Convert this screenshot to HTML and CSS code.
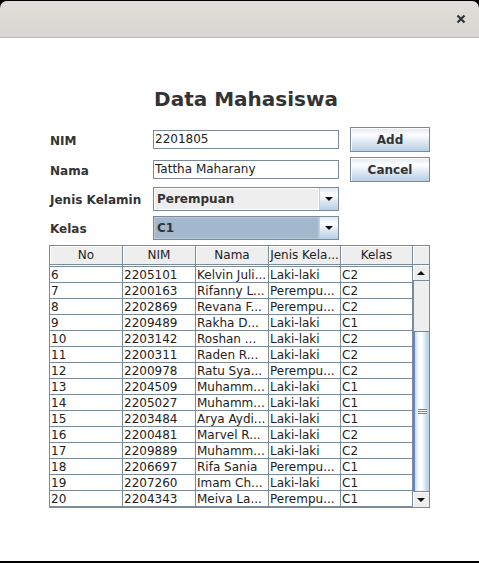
FILE: index.html
```html
<!DOCTYPE html>
<html>
<head>
<meta charset="utf-8">
<link rel="stylesheet" href="styles.css">
</head>
<body>
<div class="window">
  <div class="titlebar">
    <svg class="close" width="10" height="10" viewBox="0 0 10 10"><path d="M1.5 1.5L8.5 8.5M8.5 1.5L1.5 8.5" stroke="#2e3436" stroke-width="2.2" stroke-linecap="butt"/></svg>
  </div>
  <div class="content">
    <div class="title">Data Mahasiswa</div>
    <div class="form">
      <div class="lbl">NIM</div>
      <div class="textfield">2201805</div>
      <button class="btn">Add</button>

      <div class="lbl">Nama</div>
      <div class="textfield">Tattha Maharany</div>
      <button class="btn">Cancel</button>

      <div class="lbl">Jenis Kelamin</div>
      <div class="combo">
        <div class="combo-value">Perempuan</div>
        <div class="combo-arrow"><svg width="8" height="4" viewBox="0 0 8 4"><polygon points="0,0 8,0 4,4" fill="#111"/></svg></div>
      </div>
      <div></div><div></div>

      <div class="lbl">Kelas</div>
      <div class="combo focused">
        <div class="combo-value">C1</div>
        <div class="combo-arrow"><svg width="8" height="4" viewBox="0 0 8 4"><polygon points="0,0 8,0 4,4" fill="#111"/></svg></div>
      </div>
    </div>

    <div class="pane">
      <div class="thead">
        <div class="th">No</div>
        <div class="th">NIM</div>
        <div class="th">Nama</div>
        <div class="th">Jenis Kela...</div>
        <div class="th">Kelas</div>
      </div>
      <div class="corner"></div>
      <div class="viewport">
        <div class="rows">
          <div class="row"><div class="td"></div><div class="td"></div><div class="td"></div><div class="td"></div><div class="td"></div></div>
          <div class="row"><div class="td">6</div><div class="td">2205101</div><div class="td">Kelvin Juli...</div><div class="td">Laki-laki</div><div class="td">C2</div></div>
          <div class="row"><div class="td">7</div><div class="td">2200163</div><div class="td">Rifanny L...</div><div class="td">Perempu...</div><div class="td">C2</div></div>
          <div class="row"><div class="td">8</div><div class="td">2202869</div><div class="td">Revana F...</div><div class="td">Perempu...</div><div class="td">C2</div></div>
          <div class="row"><div class="td">9</div><div class="td">2209489</div><div class="td">Rakha D...</div><div class="td">Laki-laki</div><div class="td">C1</div></div>
          <div class="row"><div class="td">10</div><div class="td">2203142</div><div class="td">Roshan ...</div><div class="td">Laki-laki</div><div class="td">C2</div></div>
          <div class="row"><div class="td">11</div><div class="td">2200311</div><div class="td">Raden R...</div><div class="td">Laki-laki</div><div class="td">C2</div></div>
          <div class="row"><div class="td">12</div><div class="td">2200978</div><div class="td">Ratu Sya...</div><div class="td">Perempu...</div><div class="td">C2</div></div>
          <div class="row"><div class="td">13</div><div class="td">2204509</div><div class="td">Muhamm...</div><div class="td">Laki-laki</div><div class="td">C1</div></div>
          <div class="row"><div class="td">14</div><div class="td">2205027</div><div class="td">Muhamm...</div><div class="td">Laki-laki</div><div class="td">C1</div></div>
          <div class="row"><div class="td">15</div><div class="td">2203484</div><div class="td">Arya Aydi...</div><div class="td">Laki-laki</div><div class="td">C1</div></div>
          <div class="row"><div class="td">16</div><div class="td">2200481</div><div class="td">Marvel R...</div><div class="td">Laki-laki</div><div class="td">C2</div></div>
          <div class="row"><div class="td">17</div><div class="td">2209889</div><div class="td">Muhamm...</div><div class="td">Laki-laki</div><div class="td">C2</div></div>
          <div class="row"><div class="td">18</div><div class="td">2206697</div><div class="td">Rifa Sania</div><div class="td">Perempu...</div><div class="td">C1</div></div>
          <div class="row"><div class="td">19</div><div class="td">2207260</div><div class="td">Imam Ch...</div><div class="td">Laki-laki</div><div class="td">C1</div></div>
          <div class="row"><div class="td">20</div><div class="td">2204343</div><div class="td">Meiva La...</div><div class="td">Perempu...</div><div class="td">C1</div></div>
        </div>
      </div>
      <div class="vsb">
        <div class="sb-btn sb-up"><svg width="8" height="4" viewBox="0 0 8 4"><polygon points="0,4 8,4 4,0" fill="#111"/></svg></div>
        <div class="sb-track">
          <div class="sb-thumb"><div class="grip"></div></div>
        </div>
        <div class="sb-btn sb-down"><svg width="8" height="4" viewBox="0 0 8 4"><polygon points="0,0 8,0 4,4" fill="#111"/></svg></div>
      </div>
    </div>
  </div>
</div>
</body>
</html>
```

FILE: styles.css
```css
* { box-sizing: border-box; }
html, body { margin: 0; padding: 0; background: #000; }
body {
  width: 479px;
  height: 563px;
  overflow: hidden;
  font-family: "DejaVu Sans", "Noto Sans", sans-serif;
  font-size: 12px;
}
.window {
  margin-top: 1px;
  height: 560px;
  display: flex;
  flex-direction: column;
}
.titlebar {
  height: 37px;
  flex: none;
  background: linear-gradient(#e1deda, #dad7d3);
  border-radius: 7px 7px 0 0;
  border-bottom: 1px solid #bdb7b0;
  display: flex;
  justify-content: flex-end;
  align-items: center;
  padding-right: 13px;
}
.close { display: block; }
.content {
  flex: 1;
  background: #fff;
  padding-top: 50px;
}
.title {
  margin-left: 153px;
  width: 186px;
  text-align: center;
  font-weight: bold;
  font-size: 20px;
  line-height: 23px;
  color: #333;
  white-space: nowrap;
}
.form {
  margin: 16px 0 0 50px;
  display: grid;
  grid-template-columns: 103px 186px 11px 80px;
  grid-template-rows: 25px 25px 24px 24px;
  row-gap: 5px;
}
.lbl {
  align-self: center;
  font-weight: bold;
  color: #333;
  line-height: 14px;
  padding-top: 2px;
  white-space: nowrap;
}
.textfield {
  align-self: center;
  height: 19px;
  border: 1px solid #7a8a99;
  padding-left: 1px;
  line-height: 17px;
  color: #222;
  background: #fff;
  white-space: nowrap;
  overflow: hidden;
}
.btn {
  grid-column: 4;
  margin: 0;
  padding: 0;
  border: 1px solid #7a8a99;
  background: linear-gradient(#dde8f3 0%, #ffffff 30%, #dde8f3 60%, #b8cfe5 100%);
  font-family: "DejaVu Sans", sans-serif;
  font-weight: bold;
  font-size: 12px;
  color: #333;
  box-shadow: inset 1px 1px 0 #fff;
}
.combo {
  display: flex;
  border: 1px solid #7a8a99;
  height: 24px;
}
.combo-value {
  flex: 1;
  background: #eeeeee;
  font-weight: bold;
  color: #333;
  padding-left: 3px;
  line-height: 22px;
  box-shadow: inset 1px 1px 0 #fff, inset -1px -1px 0 #fff;
}
.combo.focused .combo-value {
  background: #a3b8cc;
  box-shadow: inset 1px 1px 0 #b8c9da, inset -1px -1px 0 #b8c9da;
}
.combo-arrow {
  width: 19px;
  flex: none;
  border-left: 1px solid #c5ced8;
  background: linear-gradient(#dde8f3 0%, #ffffff 30%, #dde8f3 60%, #b8cfe5 100%);
  display: flex;
  align-items: center;
  justify-content: center;
}
.combo-arrow svg { display: block; }

.pane {
  margin: 5px 0 0 49px;
  width: 381px;
  height: 263px;
  border: 1px solid #7a8a99;
  display: grid;
  grid-template-columns: 363px 16px;
  grid-template-rows: 19px 242px;
}
.thead {
  display: grid;
  grid-template-columns: 73px 73px 73px 72px 72px;
}
.th {
  background: #eeeeee;
  border-right: 1px solid #7a8a99;
  border-bottom: 1px solid #7a8a99;
  box-shadow: inset 1px 1px 0 #fff;
  text-align: center;
  line-height: 18px;
  color: #222;
  white-space: nowrap;
  overflow: hidden;
}
.corner {
  background: #eeeeee;
  border-bottom: 1px solid #7a8a99;
  box-shadow: inset 1px 1px 0 #fff;
}
.viewport {
  overflow: hidden;
  background: #fff;
}
.rows { margin-top: -14px; }
.row {
  display: grid;
  grid-template-columns: 73px 73px 73px 72px 72px;
  height: 16px;
}
.td {
  border-right: 1px solid #7a8a99;
  border-bottom: 1px solid #7a8a99;
  padding: 1px 0 0 1px;
  line-height: 14px;
  color: #222;
  white-space: nowrap;
  overflow: hidden;
}
.vsb {
  display: flex;
  flex-direction: column;
  background: #eeeeee;
}
.sb-btn {
  height: 16px;
  flex: none;
  background: #eeeeee;
  box-shadow: inset 1px 1px 0 #fff;
  display: flex;
  align-items: center;
  justify-content: center;
}
.sb-btn svg { display: block; }
.sb-up { border-bottom: 1px solid #7a8a99; }
.sb-down { border-top: 1px solid #7a8a99; }
.sb-track {
  flex: 1;
  border-left: 1px solid #7a8a99;
  background: #eeeeee;
  display: flex;
  flex-direction: column;
}
.sb-thumb {
  margin-top: 50px;
  height: 160px;
  border-top: 1px solid #6382bf;
  border-left: 1px solid #6382bf;
  background: linear-gradient(to right, #c8ddf2 0%, #ffffff 30%, #ffffff 50%, #c8ddf2 80%, #b8cfe5 100%);
  display: flex;
  align-items: center;
  justify-content: center;
}
.grip {
  width: 9px;
  height: 5px;
  background: repeating-linear-gradient(#6382bf 0 1px, #ffffff 1px 2px);
}
```
